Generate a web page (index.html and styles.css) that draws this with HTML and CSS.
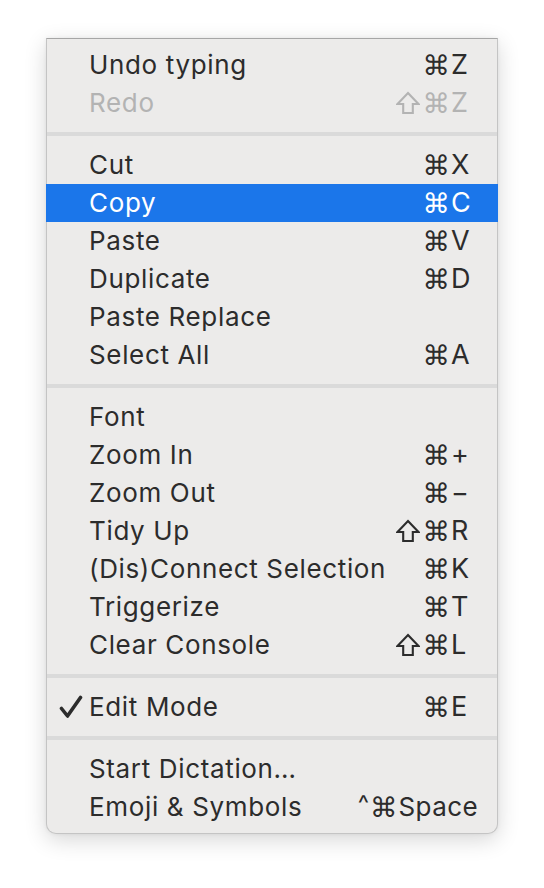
FILE: index.html
```html
<!DOCTYPE html>
<html>
<head>
<meta charset="utf-8">
<link rel="stylesheet" href="styles.css">
</head>
<body>
<div class="menu">
  <div class="row"><span class="chk"></span><span class="label">Undo typing</span><span class="sc"><span class="mod">⌘</span><span class="key">Z</span></span></div>
  <div class="row dis"><span class="chk"></span><span class="label">Redo</span><span class="sc"><svg class="shift" viewBox="0 0 24 24"><path d="M12 2 L22.5 13 L16.8 13 L16.8 22 L7.2 22 L7.2 13 L1.5 13 Z" fill="none" stroke="currentColor" stroke-width="2.1" stroke-linejoin="miter"/></svg><span class="mod">⌘</span><span class="key">Z</span></span></div>
  <div class="sep"></div>
  <div class="row"><span class="chk"></span><span class="label">Cut</span><span class="sc"><span class="mod">⌘</span><span class="key">X</span></span></div>
  <div class="row sel"><span class="chk"></span><span class="label">Copy</span><span class="sc"><span class="mod">⌘</span><span class="key">C</span></span></div>
  <div class="row"><span class="chk"></span><span class="label">Paste</span><span class="sc"><span class="mod">⌘</span><span class="key">V</span></span></div>
  <div class="row"><span class="chk"></span><span class="label">Duplicate</span><span class="sc"><span class="mod">⌘</span><span class="key">D</span></span></div>
  <div class="row"><span class="chk"></span><span class="label">Paste Replace</span></div>
  <div class="row"><span class="chk"></span><span class="label">Select All</span><span class="sc"><span class="mod">⌘</span><span class="key">A</span></span></div>
  <div class="sep"></div>
  <div class="row"><span class="chk"></span><span class="label">Font</span></div>
  <div class="row"><span class="chk"></span><span class="label">Zoom In</span><span class="sc"><span class="mod">⌘</span><span class="key">+</span></span></div>
  <div class="row"><span class="chk"></span><span class="label">Zoom Out</span><span class="sc"><span class="mod">⌘</span><span class="key">−</span></span></div>
  <div class="row"><span class="chk"></span><span class="label">Tidy Up</span><span class="sc"><svg class="shift" viewBox="0 0 24 24"><path d="M12 2 L22.5 13 L16.8 13 L16.8 22 L7.2 22 L7.2 13 L1.5 13 Z" fill="none" stroke="currentColor" stroke-width="2.1" stroke-linejoin="miter"/></svg><span class="mod">⌘</span><span class="key">R</span></span></div>
  <div class="row"><span class="chk"></span><span class="label">(Dis)Connect Selection</span><span class="sc"><span class="mod">⌘</span><span class="key">K</span></span></div>
  <div class="row"><span class="chk"></span><span class="label">Triggerize</span><span class="sc"><span class="mod">⌘</span><span class="key">T</span></span></div>
  <div class="row"><span class="chk"></span><span class="label">Clear Console</span><span class="sc"><svg class="shift" viewBox="0 0 24 24"><path d="M12 2 L22.5 13 L16.8 13 L16.8 22 L7.2 22 L7.2 13 L1.5 13 Z" fill="none" stroke="currentColor" stroke-width="2.1" stroke-linejoin="miter"/></svg><span class="mod">⌘</span><span class="key">L</span></span></div>
  <div class="sep"></div>
  <div class="row"><span class="chk"><svg width="24" height="24" viewBox="0 0 24 24"><path d="M2.5 13.5 L8.5 21 L21.5 2.5" fill="none" stroke="#2c2c2c" stroke-width="3.6" stroke-linecap="round" stroke-linejoin="round"/></svg></span><span class="label">Edit Mode</span><span class="sc"><span class="mod">⌘</span><span class="key">E</span></span></div>
  <div class="sep"></div>
  <div class="row"><span class="chk"></span><span class="label">Start Dictation…</span></div>
  <div class="row"><span class="chk"></span><span class="label">Emoji &amp; Symbols</span><span class="sc"><span class="ctrl">^</span><span class="mod">⌘</span><span class="key space">Space</span></span></div>
</div>
</body>
</html>
```

FILE: styles.css
```css
html, body {
  margin: 0;
  padding: 0;
  background: #ffffff;
}
body {
  width: 544px;
  height: 888px;
  overflow: hidden;
}
.menu {
  margin: 38px 0 0 46px;
  width: 452px;
  box-sizing: border-box;
  padding: 7px 0;
  background: #ecebea;
  border: 1px solid #c4c4c4;
  border-top-color: #a6a6a6;
  border-radius: 0 0 10px 10px;
  box-shadow: 0 6px 22px rgba(0,0,0,0.16), 0 0 4px rgba(0,0,0,0.06);
  font-family: Inter, "Noto Sans", sans-serif;
  font-size: 26px;
  letter-spacing: 0.65px;
  color: #2c2c2c;
}
.row {
  display: flex;
  align-items: center;
  height: 38px;
  margin: 0 -1px;
  padding-right: 24px;
  padding-bottom: 1px;
  box-sizing: border-box;
}
.chk {
  width: 43px;
  flex: none;
  display: flex;
  justify-content: center;
  padding-left: 6px;
  box-sizing: border-box;
}
.chk svg { display: block; }
.label {
  flex: 1;
  white-space: nowrap;
}
.sc {
  display: flex;
  align-items: center;
  white-space: nowrap;
  letter-spacing: 0;
}
.shift {
  width: 24px;
  height: 24px;
  margin-right: 3px;
  display: block;
}
.ctrl {
  font-size: 24px;
  margin-right: 1px;
  position: relative;
  top: -3px;
}
.mod {
  font-family: "DejaVu Sans", sans-serif;
  font-size: 27.5px;
  display: block;
}
.key {
  min-width: 23px;
  padding-left: 1px;
  font-size: 27px;
}
.key.space {
  font-size: 26px;
  margin-right: -4px;
  letter-spacing: 0.4px;
}
.dis { color: #b3b3b3; }
.sel {
  background: #1b76ea;
  color: #ffffff;
}
.sep {
  height: 4px;
  margin: 10px 0;
  background: #dadada;
}
```
